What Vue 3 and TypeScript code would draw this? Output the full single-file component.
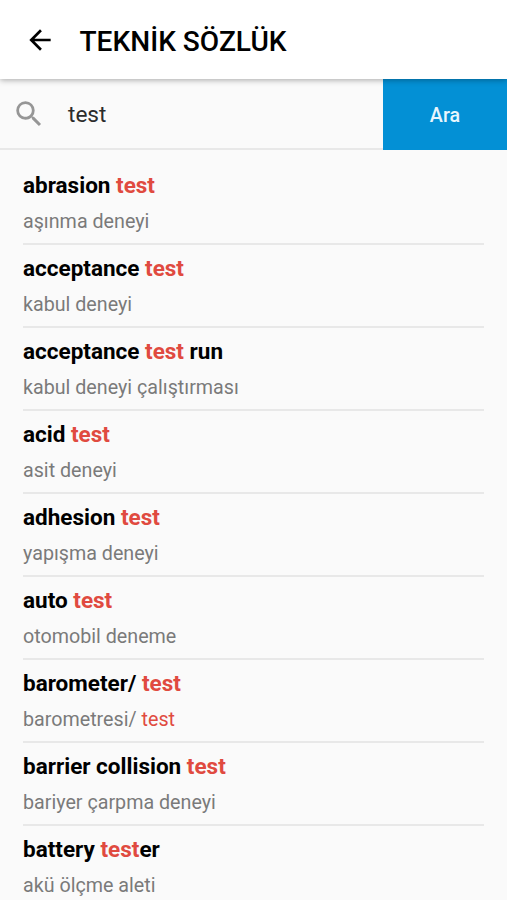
<script setup lang="ts">
interface Entry {
  term: string
  meaning: string
}

const query = 'test'

const entries: Entry[] = [
  { term: 'abrasion test', meaning: 'aşınma deneyi' },
  { term: 'acceptance test', meaning: 'kabul deneyi' },
  { term: 'acceptance test run', meaning: 'kabul deneyi çalıştırması' },
  { term: 'acid test', meaning: 'asit deneyi' },
  { term: 'adhesion test', meaning: 'yapışma deneyi' },
  { term: 'auto test', meaning: 'otomobil deneme' },
  { term: 'barometer/ test', meaning: 'barometresi/ test' },
  { term: 'barrier collision test', meaning: 'bariyer çarpma deneyi' },
  { term: 'battery tester', meaning: 'akü ölçme aleti' },
]

// Splits on the query and keeps the matches, so they can be highlighted
const parts = (text: string): string[] => text.split(new RegExp(`(${query})`)).filter(Boolean)
</script>

<template>
  <div class="screen">
    <header class="toolbar">
      <svg class="back" viewBox="0 0 24 24" aria-hidden="true">
        <path d="M20 11H7.83l5.59-5.59L12 4l-8 8 8 8 1.41-1.41L7.83 13H20v-2z" />
      </svg>
      <h1>TEKNİK SÖZLÜK</h1>
    </header>
    <div class="search">
      <div class="field">
        <svg class="glass" viewBox="0 0 24 24" aria-hidden="true">
          <path d="M15.5 14h-.79l-.28-.27A6.471 6.471 0 0 0 16 9.5 6.5 6.5 0 1 0 9.5 16c1.61 0 3.09-.59 4.23-1.57l.27.28v.79l5 4.99L20.49 19l-4.99-5zm-6 0C7.01 14 5 11.99 5 9.5S7.01 5 9.5 5 14 7.01 14 9.5 11.99 14 9.5 14z" />
        </svg>
        <span class="query">{{ query }}</span>
      </div>
      <button type="button">Ara</button>
    </div>
    <ul class="results">
      <li v-for="entry in entries" :key="entry.term">
        <div class="term">
          <span v-for="(part, i) in parts(entry.term)" :key="i" :class="{ hit: part === query }">{{ part }}</span>
        </div>
        <div class="meaning">
          <span v-for="(part, i) in parts(entry.meaning)" :key="i" :class="{ hit: part === query }">{{ part }}</span>
        </div>
      </li>
    </ul>
  </div>
</template>

<style>
body {
  margin: 0;
  background: #fafafa;
}
</style>

<style scoped>
.screen {
  height: 900px;
  overflow: hidden;
  display: flex;
  flex-direction: column;
  background: #fafafa;
  font-family: Roboto, sans-serif;
}
.toolbar {
  flex: none;
  position: relative;
  height: 79px;
  box-sizing: border-box;
  padding: 2px 0 0 24px;
  display: flex;
  align-items: center;
  background: #fff;
  box-shadow: 0 1px 6px rgba(0, 0, 0, 0.34);
}
.back {
  width: 32px;
  height: 32px;
  margin-top: -2px;
  fill: #000;
}
h1 {
  margin: 2px 0 0 23.5px;
  font-size: 28.1px;
  font-weight: 500;
  line-height: 36px;
  color: #000;
}
.search {
  flex: none;
  height: 70.5px;
  display: flex;
}
.field {
  flex: 1;
  box-sizing: border-box;
  border-bottom: 2px solid #e8e8e8;
  padding-left: 12px;
  display: flex;
  align-items: center;
  font-size: 22.6px;
  color: #2b2b2b;
}
.query {
  padding-top: 2px;
}
.glass {
  width: 34px;
  height: 34px;
  margin: 1.5px 22px 0 0;
  fill: #969696;
}
button {
  width: 124px;
  border: 0;
  padding: 2px 0 0;
  background: #0390d5;
  color: #e8f6fd;
  font: 500 19.7px Roboto, sans-serif;
}
.results {
  list-style: none;
  margin: 0;
  padding: 12.5px 23px 0;
}
li {
  height: 82.95px;
  box-sizing: border-box;
  border-bottom: 2px solid #e8e8e8;
  padding-top: 9px;
  white-space: pre;
}
.term {
  font-size: 22.5px;
  font-weight: 700;
  line-height: 28px;
  color: #000;
}
.meaning {
  margin-top: 9px;
  font-size: 19.7px;
  line-height: 28px;
  color: #7a7a7a;
}
.hit {
  color: #e04a40;
}
</style>
